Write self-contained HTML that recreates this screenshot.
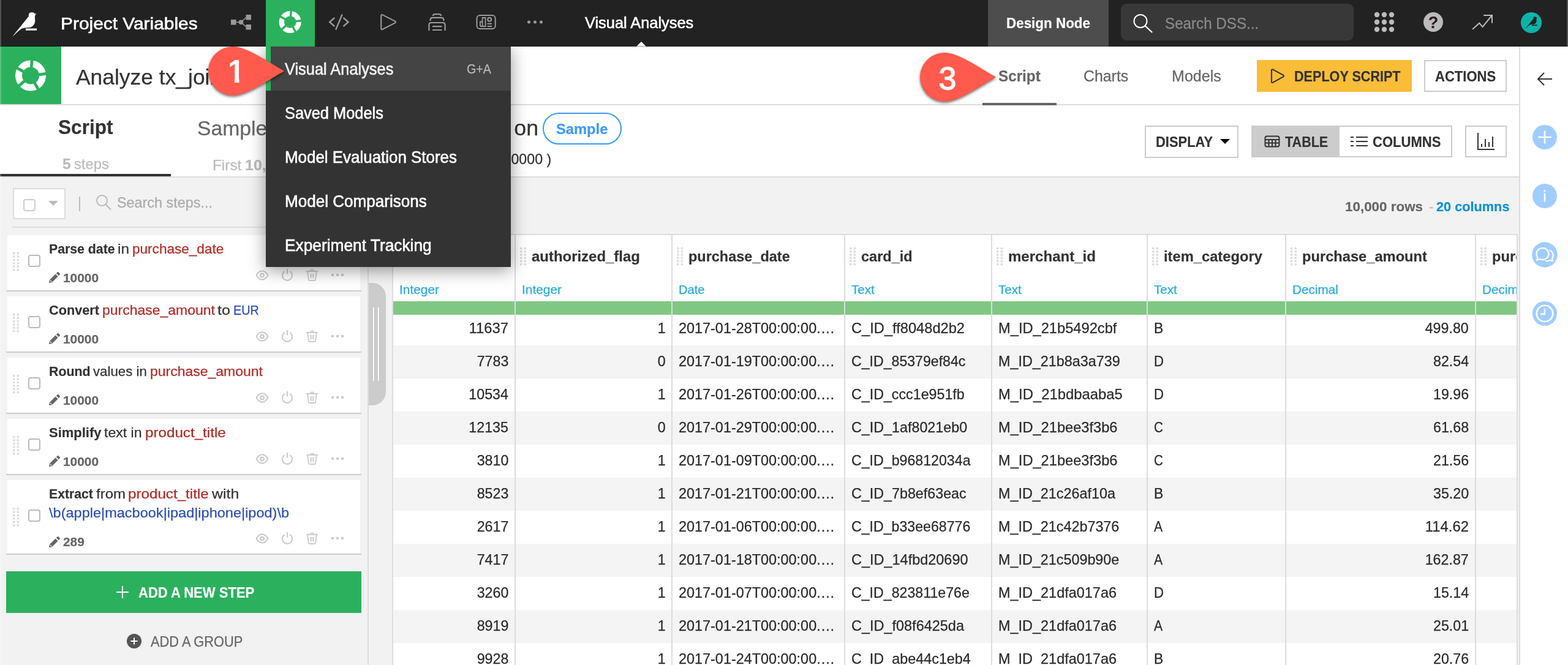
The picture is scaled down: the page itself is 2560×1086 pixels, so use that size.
<!DOCTYPE html>
<html lang="en"><head><meta charset="utf-8"><title>Analyze tx_joined - Script | Dataiku DSS</title>
<style>
html,body{margin:0;padding:0;}
body{width:2560px;height:1086px;background:#f2f2f2;font-family:"Liberation Sans",sans-serif;}
#root{position:relative;width:2560px;height:1086px;overflow:hidden;background:#f2f2f2;}
.b{position:absolute;box-sizing:border-box;}
.t{position:absolute;white-space:nowrap;}
svg{display:block;overflow:visible;}
.t{-webkit-text-stroke:0.25px currentColor;}
.tb{font-weight:bold;-webkit-text-stroke:0.2px currentColor;}

</style></head>
<body>
<div id="root">
<div class="b" style="left:0px;top:0px;width:2560px;height:76px;background:#222222;"></div>
<div class="b" style="left:0px;top:76px;width:2480px;height:94px;background:#fff;"></div>
<div class="b" style="left:0px;top:170px;width:2480px;height:2px;background:#ddd;"></div>
<div class="b" style="left:0px;top:172px;width:2480px;height:116px;background:#fff;"></div>
<div class="b" style="left:0px;top:288px;width:2480px;height:2px;background:#ddd;"></div>
<div class="b" style="left:2480px;top:76px;width:80px;height:1010px;background:#fff;border-left:2px solid #ddd;"></div>
<svg class="b" style="left:0px;top:0px;" width="100" height="76" viewBox="0 0 100 76"><path d="M20 60 L47 26.5 C46 23 48 20 52 20 C54.5 20 56 21 57 22.5 L59.5 22.3 L57.5 24.5 C56.5 27 57 30 57.3 33 C57.5 38 55 43 49 44.8 C45 45.5 40 45 36 46.5 C33 47.8 30 51 20 60 Z" fill="#fff"/><rect x="42" y="46.5" width="18" height="3.2" fill="#fff"/></svg>
<div class="t" style="top:25.30px;font-size:28.00px;line-height:28.00px;color:#fff;left:99.30px;transform-origin:0 0;transform:scaleX(1.0671);-webkit-text-stroke-width:0.6px;">Project Variables</div>
<svg class="b" style="left:370px;top:16px;" width="48" height="40" viewBox="0 0 48 40"><g fill="#999" stroke="#999"><rect x="7" y="16" width="8.5" height="8.5" stroke="none"/><rect x="31.5" y="8" width="8.5" height="8.5" stroke="none"/><rect x="31.5" y="24" width="8.5" height="8.5" stroke="none"/><circle cx="23.4" cy="20.2" r="3.8" stroke="none"/><path d="M15 20.2H23 M23.4 20.2 L32 12.5 M23.4 20.2 L32 28" fill="none" stroke-width="1.6"/></g></svg>
<div class="b" style="left:434px;top:0px;width:80px;height:76px;background:#2bb15d;"></div>
<svg class="b" style="left:434px;top:0px;" width="80" height="76" viewBox="0 0 80 76"><circle cx="39.7" cy="36" r="13.9" fill="none" stroke="#fff" stroke-width="8.2"/><line x1="40.38" y1="28.23" x2="41.44" y2="16.08" stroke="#2bb15d" stroke-width="3.42"/><line x1="47.44" y1="35.05" x2="59.55" y2="33.56" stroke="#2bb15d" stroke-width="3.42"/><line x1="43.48" y1="42.82" x2="49.40" y2="53.49" stroke="#2bb15d" stroke-width="3.42"/><line x1="33.81" y1="41.12" x2="24.61" y2="49.12" stroke="#2bb15d" stroke-width="3.42"/><line x1="32.88" y1="32.22" x2="22.21" y2="26.30" stroke="#2bb15d" stroke-width="3.42"/></svg>
<svg class="b" style="left:530px;top:16px;" width="48" height="40" viewBox="0 0 48 40"><path d="M16.2 13 L8.2 20 L16.2 27 M28.7 7.5 L18.2 32.5 M30.6 13 L38.6 20 L30.6 27" fill="none" stroke="#999" stroke-width="2.4"/></svg>
<svg class="b" style="left:610px;top:16px;" width="48" height="40" viewBox="0 0 48 40"><path d="M12.2 10 Q12.2 7.2 14.8 8.4 L35 18.6 Q37 20 35 21.4 L14.8 31.8 Q12.2 33 12.2 30.2 Z" fill="none" stroke="#999" stroke-width="2.1" stroke-linejoin="round"/></svg>
<svg class="b" style="left:690px;top:16px;" width="48" height="40" viewBox="0 0 48 40"><g fill="none" stroke="#999" stroke-width="2.2"><path d="M16.8 10 q0.3 -2.9 3.4 -2.9 h6.6 q3.1 0 3.4 2.9"/><path d="M12.6 18 v-1.5 q0 -3.6 3.6 -3.6 h14.6 q3.6 0 3.6 3.6 v1.5"/><path d="M10.4 34 v-9 q0 -4 4 -4 h18.2 q4 0 4 4 v9"/><path d="M16 27.2 h15.4 M16 33 h15.4"/></g></svg>
<svg class="b" style="left:770px;top:16px;" width="48" height="40" viewBox="0 0 48 40"><g fill="none" stroke="#999" stroke-width="2"><rect x="8.5" y="9" width="30.2" height="22" rx="5"/><path d="M14 27 v-7.5 h3.6 M17.6 27 v-14 h5 v14 Z M14 27 h8.6" stroke-width="1.8"/><circle cx="29.2" cy="15.8" r="3"/><path d="M25.5 22.8 h7.6 M25.5 27 h7.6"/></g></svg>
<svg class="b" style="left:850px;top:16px;" width="48" height="40" viewBox="0 0 48 40"><g fill="#999"><circle cx="13.5" cy="20" r="2.5"/><circle cx="23.5" cy="20" r="2.5"/><circle cx="33.5" cy="20" r="2.5"/></g></svg>
<div class="t" style="top:24.30px;font-size:26.32px;line-height:26.32px;color:#fff;left:955.00px;transform-origin:0 0;transform:scaleX(0.9646);-webkit-text-stroke-width:0.6px;">Visual Analyses</div>
<svg class="b" style="left:1037px;top:66px;" width="20" height="10" viewBox="0 0 20 10"><path d="M2 10 L10 2 L18 10 Z" fill="#fff"/></svg>
<div class="b" style="left:1613px;top:0px;width:197px;height:76px;background:#4d4d4d;"></div>
<div class="t tb" style="top:26.30px;font-size:24.44px;line-height:24.44px;color:#fff;left:1643.00px;transform-origin:0 0;transform:scaleX(0.9173);">Design Node</div>
<div class="b" style="left:1830px;top:6px;width:380px;height:60px;background:#383838;border-radius:9px;"></div>
<svg class="b" style="left:1846px;top:18px;" width="40" height="40" viewBox="0 0 40 40"><circle cx="16" cy="16.5" r="10.5" fill="none" stroke="#fff" stroke-width="2"/><path d="M23.6 24.2 L35.2 35" stroke="#fff" stroke-width="2.2" fill="none"/></svg>
<div class="t" style="top:25.30px;font-size:26.32px;line-height:26.32px;color:#8a8a8a;left:1902.00px;transform-origin:0 0;transform:scaleX(0.9193);">Search DSS...</div>
<svg class="b" style="left:2240px;top:16px;" width="40" height="40" viewBox="0 0 40 40"><g fill="#bbb"><circle cx="8" cy="8" r="4.2"/><circle cx="8" cy="20" r="4.2"/><circle cx="8" cy="32" r="4.2"/><circle cx="20" cy="8" r="4.2"/><circle cx="20" cy="20" r="4.2"/><circle cx="20" cy="32" r="4.2"/><circle cx="32" cy="8" r="4.2"/><circle cx="32" cy="20" r="4.2"/><circle cx="32" cy="32" r="4.2"/></g></svg>
<svg class="b" style="left:2320px;top:16px;" width="40" height="40" viewBox="0 0 40 40"><circle cx="20" cy="20" r="16" fill="#bbb"/><text x="20" y="29.5" text-anchor="middle" style="font-family:'Liberation Sans',sans-serif;font-weight:bold;font-size:27px" fill="#222">?</text></svg>
<svg class="b" style="left:2400px;top:16px;" width="40" height="40" viewBox="0 0 40 40"><path d="M4.2 31.8 L15.2 21.7 L20.5 27.9 L35.5 9.5 M22.2 9 H36 V21.7" fill="none" stroke="#bbb" stroke-width="2"/></svg>
<svg class="b" style="left:2480px;top:17px;" width="40" height="40" viewBox="0 0 40 40"><circle cx="20" cy="20" r="17.1" fill="#0bb3a9"/><g transform="translate(0,0.2) scale(0.5)"><path d="M20 60 L47 26.5 C46 23 48 20 52 20 C54.5 20 56 21 57 22.5 L59.5 22.3 L57.5 24.5 C56.5 27 57 30 57.3 33 C57.5 38 55 43 49 44.8 C45 45.5 40 45 36 46.5 C33 47.8 30 51 20 60 Z" fill="#222"/><rect x="42" y="46.5" width="18" height="3.2" fill="#222"/></g></svg>
<div class="b" style="left:0px;top:76px;width:100px;height:94px;background:#2bb15d;"></div>
<svg class="b" style="left:0px;top:76px;" width="100" height="94" viewBox="0 0 100 94"><circle cx="50" cy="47.5" r="19.5" fill="none" stroke="#fff" stroke-width="11"/><line x1="51.05" y1="35.55" x2="52.35" y2="20.60" stroke="#2bb15d" stroke-width="4.75"/><line x1="61.91" y1="46.04" x2="76.80" y2="44.21" stroke="#2bb15d" stroke-width="4.75"/><line x1="55.82" y1="58.00" x2="63.09" y2="71.11" stroke="#2bb15d" stroke-width="4.75"/><line x1="40.94" y1="55.37" x2="29.62" y2="65.21" stroke="#2bb15d" stroke-width="4.75"/><line x1="39.50" y1="41.68" x2="26.39" y2="34.41" stroke="#2bb15d" stroke-width="4.75"/></svg>
<div class="t" style="top:109.30px;font-size:35.72px;line-height:35.72px;color:#333;left:123.50px;transform-origin:0 0;transform:scaleX(0.9913);">Analyze tx_joined</div>
<div class="t tb" style="top:112.30px;font-size:25.38px;line-height:25.38px;color:#666;left:1630.30px;transform-origin:0 0;transform:scaleX(0.9555);">Script</div>
<div class="t" style="top:112.30px;font-size:25.38px;line-height:25.38px;color:#666;left:1768.60px;transform-origin:0 0;transform:scaleX(0.9801);">Charts</div>
<div class="t" style="top:112.30px;font-size:25.38px;line-height:25.38px;color:#666;left:1913.00px;transform-origin:0 0;transform:scaleX(0.9882);">Models</div>
<div class="b" style="left:1604px;top:168px;width:121px;height:4px;background:#666;"></div>
<div class="b" style="left:2052px;top:98px;width:253px;height:52px;background:#f9bd38;"></div>
<svg class="b" style="left:2070px;top:108px;" width="32" height="32" viewBox="0 0 32 32"><path d="M6 7 Q6 4.4 8.4 5.6 L25 14.6 Q27 16 25 17.4 L8.4 26.6 Q6 27.8 6 25.2 Z" fill="none" stroke="#333" stroke-width="2.1" stroke-linejoin="round"/></svg>
<div class="t tb" style="top:113.30px;font-size:24.44px;line-height:24.44px;color:#333;left:2113.00px;transform-origin:0 0;transform:scaleX(0.8835);">DEPLOY SCRIPT</div>
<div class="b" style="left:2325px;top:98px;width:135px;height:52px;background:#fff;border:2px solid #ccc;"></div>
<div class="t tb" style="top:113.30px;font-size:24.44px;line-height:24.44px;color:#333;left:2342.50px;transform-origin:0 0;transform:scaleX(0.9017);">ACTIONS</div>
<svg class="b" style="left:2506px;top:115px;" width="32" height="28" viewBox="0 0 32 28"><path d="M28 14 H5 M15 4 L5 14 L15 24" fill="none" stroke="#333" stroke-width="2"/></svg>
<div class="t tb" style="top:191.30px;font-size:33.84px;line-height:33.84px;color:#333;left:94.80px;transform-origin:0 0;transform:scaleX(0.9335);">Script</div>
<div class="t" style="top:193.30px;font-size:33.84px;line-height:33.84px;color:#666;left:322.00px;transform-origin:0 0;transform:scaleX(0.9959);">Sample</div>
<div class="t tb" style="top:256.30px;left:101.80px;font-size:24.44px;line-height:24.44px;color:#bbb;transform-origin:0 0;transform:scaleX(1.0103);">5</div>
<div class="t" style="top:256.30px;left:120.74px;font-size:24.44px;line-height:24.44px;color:#bbb;transform-origin:0 0;transform:scaleX(0.9754);">steps</div>
<div class="t" style="top:258.30px;left:347.00px;font-size:24.44px;line-height:24.44px;color:#bbb;transform-origin:0 0;transform:scaleX(0.9964);">First</div>
<div class="t tb" style="top:258.30px;left:399.55px;font-size:24.44px;line-height:24.44px;color:#bbb;transform-origin:0 0;transform:scaleX(1.0228);">10,000</div>
<div class="t" style="top:258.30px;left:481.20px;font-size:24.44px;line-height:24.44px;color:#bbb;transform-origin:0 0;transform:scaleX(1.0145);">rows</div>
<div class="b" style="left:0px;top:284px;width:279px;height:4px;background:#333;"></div>
<div class="t" style="top:192.30px;font-size:35.72px;line-height:35.72px;color:#333;right:1681.00px;transform-origin:100% 0;transform:scaleX(1.0028);">Designing preparation on</div>
<div class="b" style="left:886px;top:184px;width:129px;height:52px;border:2px solid #3b99fc;border-radius:26px;background:#fff;"></div>
<div class="t tb" style="top:199.30px;font-size:24.44px;line-height:24.44px;color:#3b99fc;left:908.00px;transform-origin:0 0;transform:scaleX(0.9709);">Sample</div>
<div class="t" style="top:248.30px;font-size:24.44px;line-height:24.44px;color:#333;right:1660.00px;transform-origin:100% 0;transform:scaleX(0.9488);">( cached, 10000 )</div>
<div class="b" style="left:1869px;top:205px;width:153px;height:53px;background:#fff;border:2px solid #ccc;"></div>
<div class="t tb" style="top:220.30px;font-size:24.44px;line-height:24.44px;color:#333;left:1887.00px;transform-origin:0 0;transform:scaleX(0.8972);">DISPLAY</div>
<svg class="b" style="left:1990px;top:225px;" width="20" height="12" viewBox="0 0 20 12"><path d="M2 2 H18 L10 10 Z" fill="#000"/></svg>
<div class="b" style="left:2043px;top:205px;width:144px;height:52px;background:#ccc;"></div>
<svg class="b" style="left:2063px;top:219px;" width="28" height="24" viewBox="0 0 28 24"><g fill="none" stroke="#333" stroke-width="2"><rect x="2.5" y="3.5" width="23" height="17" rx="3"/><path d="M2.5 9 H25.5 M2.5 14.5 H25.5 M8.5 9 V20.5 M14 9 V20.5 M19.5 9 V20.5"/></g></svg>
<div class="t tb" style="top:220.30px;font-size:24.44px;line-height:24.44px;color:#333;left:2098.00px;transform-origin:0 0;transform:scaleX(0.8819);">TABLE</div>
<div class="b" style="left:2187px;top:205px;width:184px;height:52px;background:#fff;border:2px solid #ccc;border-left:none;"></div>
<svg class="b" style="left:2203px;top:219px;" width="32" height="24" viewBox="0 0 32 24"><path d="M2 5 H7 M11 5 H30 M2 12 H7 M11 12 H30 M2 19 H7 M11 19 H30" fill="none" stroke="#333" stroke-width="2"/></svg>
<div class="t tb" style="top:220.30px;font-size:24.44px;line-height:24.44px;color:#333;left:2241.00px;transform-origin:0 0;transform:scaleX(0.9025);">COLUMNS</div>
<div class="b" style="left:2392px;top:205px;width:68px;height:52px;background:#fff;border:2px solid #ccc;"></div>
<svg class="b" style="left:2408px;top:213px;" width="36" height="36" viewBox="0 0 36 36"><path d="M5 4 V31 H32 M11 27 V22 M17 27 V14 M23 27 V19 M29 27 V10" fill="none" stroke="#333" stroke-width="2"/></svg>
<div class="b" style="left:600px;top:290px;width:2px;height:796px;background:#ddd;"></div>
<div class="b" style="left:20.5px;top:306.5px;width:86.5px;height:51px;background:#fff;border:2px solid #ddd;"></div>
<div class="b" style="left:38px;top:325px;width:20px;height:20px;background:#fff;border:2px solid #ccc;border-radius:4px;"></div>
<svg class="b" style="left:77px;top:326px;" width="20" height="12" viewBox="0 0 20 12"><path d="M2 2 H18 L10 10 Z" fill="#bbb"/></svg>
<div class="b" style="left:129px;top:321px;width:2px;height:24px;background:#bbb;"></div>
<svg class="b" style="left:154px;top:315px;" width="30" height="30" viewBox="0 0 30 30"><circle cx="12.5" cy="12.5" r="8.5" fill="none" stroke="#bbb" stroke-width="2"/><path d="M18.7 18.9 L27 27.5" stroke="#bbb" stroke-width="2.2" fill="none"/></svg>
<div class="t" style="top:319.30px;font-size:24.44px;line-height:24.44px;color:#aaa;left:191.00px;transform-origin:0 0;transform:scaleX(0.9564);">Search steps...</div>
<div class="b" style="left:20px;top:370px;width:570px;height:2px;background:#ddd;"></div>
<div class="b" style="left:12px;top:384px;width:576px;height:90px;background:#fff;"></div>
<div class="b" style="left:10px;top:474px;width:580px;height:2px;background:#ccc;"></div>
<svg class="b" style="left:21px;top:412px;" width="12" height="32" viewBox="0 0 12 32"><g fill="#ddd"><rect x="0" y="0" width="3.4" height="3.4"/><rect x="0" y="5.4" width="3.4" height="3.4"/><rect x="0" y="10.8" width="3.4" height="3.4"/><rect x="0" y="16.2" width="3.4" height="3.4"/><rect x="0" y="21.6" width="3.4" height="3.4"/><rect x="0" y="27" width="3.4" height="3.4"/><rect x="6.6" y="0" width="3.4" height="3.4"/><rect x="6.6" y="5.4" width="3.4" height="3.4"/><rect x="6.6" y="10.8" width="3.4" height="3.4"/><rect x="6.6" y="16.2" width="3.4" height="3.4"/><rect x="6.6" y="21.6" width="3.4" height="3.4"/><rect x="6.6" y="27" width="3.4" height="3.4"/></g></svg>
<div class="b" style="left:46px;top:416px;width:20px;height:20px;background:#fff;border:2px solid #bbb;border-radius:4px;"></div>
<div class="t tb" style="top:396.30px;left:80.00px;font-size:22.56px;line-height:22.56px;color:#333;transform-origin:0 0;transform:scaleX(0.9429);">Parse date</div>
<div class="t" style="top:396.30px;left:192.36px;font-size:22.56px;line-height:22.56px;color:#333;transform-origin:0 0;transform:scaleX(1.0845);">in</div>
<div class="t" style="top:396.30px;left:216.22px;font-size:22.56px;line-height:22.56px;color:#b02a26;transform-origin:0 0;transform:scaleX(1.0007);">purchase_date</div>
<svg class="b" style="left:79px;top:443px;" width="20" height="20" viewBox="0 0 20 20"><path d="M1 19 L1.8 14.2 L11.6 4.4 L15.6 8.4 L5.8 18.2 Z M12.8 3.2 L14.6 1.4 Q15.6 0.6 16.6 1.4 L18.6 3.4 Q19.4 4.4 18.6 5.4 L16.8 7.2 Z" fill="#666"/><path d="M2.6 14.6 L5.4 17.4" stroke="#fff" stroke-width="1.1"/></svg>
<div class="t tb" style="top:444.30px;font-size:20.68px;line-height:20.68px;color:#666;left:103.20px;transform-origin:0 0;transform:scaleX(1.0106);">10000</div>
<svg class="b" style="left:417px;top:438.5px;" width="24" height="22" viewBox="0 0 24 22"><g fill="none" stroke="#ccc"><path d="M1.6 10.5 Q5.4 3.4 11 3.4 Q16.6 3.4 20.4 10.5 Q16.6 17.6 11 17.6 Q5.4 17.6 1.6 10.5 Z" stroke-width="2.2" stroke-linejoin="round"/><circle cx="11" cy="10.5" r="2.8" stroke-width="2.4"/></g></svg>
<svg class="b" style="left:458px;top:438px;" width="22" height="22" viewBox="0 0 22 22"><g fill="none" stroke="#ccc" stroke-width="2.1"><path d="M6.6 5.2 A8 8 0 1 0 15.4 5.2"/><path d="M11 1 V9.5"/></g></svg>
<svg class="b" style="left:499px;top:438px;" width="22" height="22" viewBox="0 0 22 22"><g fill="none" stroke="#ccc" stroke-width="1.9"><path d="M1 5 H20"/><path d="M7.6 4.6 A3 3 0 0 1 13.4 4.6"/><path d="M3.2 5.5 L4.8 18.5 Q5 20 6.6 20 H14.4 Q16 20 16.2 18.5 L17.8 5.5"/><path d="M8.6 9 V16.5 M12.4 9 V16.5" stroke-width="2.2"/></g></svg>
<svg class="b" style="left:539.5px;top:446px;" width="22" height="6" viewBox="0 0 22 6"><g fill="#ccc"><circle cx="3" cy="3" r="2.3"/><circle cx="11" cy="3" r="2.3"/><circle cx="19" cy="3" r="2.3"/></g></svg>
<div class="b" style="left:12px;top:484px;width:576px;height:90px;background:#fff;"></div>
<div class="b" style="left:10px;top:574px;width:580px;height:2px;background:#ccc;"></div>
<svg class="b" style="left:21px;top:512px;" width="12" height="32" viewBox="0 0 12 32"><g fill="#ddd"><rect x="0" y="0" width="3.4" height="3.4"/><rect x="0" y="5.4" width="3.4" height="3.4"/><rect x="0" y="10.8" width="3.4" height="3.4"/><rect x="0" y="16.2" width="3.4" height="3.4"/><rect x="0" y="21.6" width="3.4" height="3.4"/><rect x="0" y="27" width="3.4" height="3.4"/><rect x="6.6" y="0" width="3.4" height="3.4"/><rect x="6.6" y="5.4" width="3.4" height="3.4"/><rect x="6.6" y="10.8" width="3.4" height="3.4"/><rect x="6.6" y="16.2" width="3.4" height="3.4"/><rect x="6.6" y="21.6" width="3.4" height="3.4"/><rect x="6.6" y="27" width="3.4" height="3.4"/></g></svg>
<div class="b" style="left:46px;top:516px;width:20px;height:20px;background:#fff;border:2px solid #bbb;border-radius:4px;"></div>
<div class="t tb" style="top:496.30px;left:80.00px;font-size:22.56px;line-height:22.56px;color:#333;transform-origin:0 0;transform:scaleX(0.9620);">Convert</div>
<div class="t" style="top:496.30px;left:166.78px;font-size:22.56px;line-height:22.56px;color:#b02a26;transform-origin:0 0;transform:scaleX(1.0184);">purchase_amount</div>
<div class="t" style="top:496.30px;left:355.42px;font-size:22.56px;line-height:22.56px;color:#333;transform-origin:0 0;transform:scaleX(1.1055);">to</div>
<div class="t" style="top:496.30px;left:381.03px;font-size:22.56px;line-height:22.56px;color:#2b4fb5;transform-origin:0 0;transform:scaleX(0.8779);">EUR</div>
<svg class="b" style="left:79px;top:543px;" width="20" height="20" viewBox="0 0 20 20"><path d="M1 19 L1.8 14.2 L11.6 4.4 L15.6 8.4 L5.8 18.2 Z M12.8 3.2 L14.6 1.4 Q15.6 0.6 16.6 1.4 L18.6 3.4 Q19.4 4.4 18.6 5.4 L16.8 7.2 Z" fill="#666"/><path d="M2.6 14.6 L5.4 17.4" stroke="#fff" stroke-width="1.1"/></svg>
<div class="t tb" style="top:544.30px;font-size:20.68px;line-height:20.68px;color:#666;left:103.20px;transform-origin:0 0;transform:scaleX(1.0106);">10000</div>
<svg class="b" style="left:417px;top:538.5px;" width="24" height="22" viewBox="0 0 24 22"><g fill="none" stroke="#ccc"><path d="M1.6 10.5 Q5.4 3.4 11 3.4 Q16.6 3.4 20.4 10.5 Q16.6 17.6 11 17.6 Q5.4 17.6 1.6 10.5 Z" stroke-width="2.2" stroke-linejoin="round"/><circle cx="11" cy="10.5" r="2.8" stroke-width="2.4"/></g></svg>
<svg class="b" style="left:458px;top:538px;" width="22" height="22" viewBox="0 0 22 22"><g fill="none" stroke="#ccc" stroke-width="2.1"><path d="M6.6 5.2 A8 8 0 1 0 15.4 5.2"/><path d="M11 1 V9.5"/></g></svg>
<svg class="b" style="left:499px;top:538px;" width="22" height="22" viewBox="0 0 22 22"><g fill="none" stroke="#ccc" stroke-width="1.9"><path d="M1 5 H20"/><path d="M7.6 4.6 A3 3 0 0 1 13.4 4.6"/><path d="M3.2 5.5 L4.8 18.5 Q5 20 6.6 20 H14.4 Q16 20 16.2 18.5 L17.8 5.5"/><path d="M8.6 9 V16.5 M12.4 9 V16.5" stroke-width="2.2"/></g></svg>
<svg class="b" style="left:539.5px;top:546px;" width="22" height="6" viewBox="0 0 22 6"><g fill="#ccc"><circle cx="3" cy="3" r="2.3"/><circle cx="11" cy="3" r="2.3"/><circle cx="19" cy="3" r="2.3"/></g></svg>
<div class="b" style="left:12px;top:584px;width:576px;height:90px;background:#fff;"></div>
<div class="b" style="left:10px;top:674px;width:580px;height:2px;background:#ccc;"></div>
<svg class="b" style="left:21px;top:612px;" width="12" height="32" viewBox="0 0 12 32"><g fill="#ddd"><rect x="0" y="0" width="3.4" height="3.4"/><rect x="0" y="5.4" width="3.4" height="3.4"/><rect x="0" y="10.8" width="3.4" height="3.4"/><rect x="0" y="16.2" width="3.4" height="3.4"/><rect x="0" y="21.6" width="3.4" height="3.4"/><rect x="0" y="27" width="3.4" height="3.4"/><rect x="6.6" y="0" width="3.4" height="3.4"/><rect x="6.6" y="5.4" width="3.4" height="3.4"/><rect x="6.6" y="10.8" width="3.4" height="3.4"/><rect x="6.6" y="16.2" width="3.4" height="3.4"/><rect x="6.6" y="21.6" width="3.4" height="3.4"/><rect x="6.6" y="27" width="3.4" height="3.4"/></g></svg>
<div class="b" style="left:46px;top:616px;width:20px;height:20px;background:#fff;border:2px solid #bbb;border-radius:4px;"></div>
<div class="t tb" style="top:596.30px;left:80.00px;font-size:22.56px;line-height:22.56px;color:#333;transform-origin:0 0;transform:scaleX(0.9453);">Round</div>
<div class="t" style="top:596.30px;left:152.28px;font-size:22.56px;line-height:22.56px;color:#333;transform-origin:0 0;transform:scaleX(0.9865);">values in</div>
<div class="t" style="top:596.30px;left:244.89px;font-size:22.56px;line-height:22.56px;color:#b02a26;transform-origin:0 0;transform:scaleX(1.0184);">purchase_amount</div>
<svg class="b" style="left:79px;top:643px;" width="20" height="20" viewBox="0 0 20 20"><path d="M1 19 L1.8 14.2 L11.6 4.4 L15.6 8.4 L5.8 18.2 Z M12.8 3.2 L14.6 1.4 Q15.6 0.6 16.6 1.4 L18.6 3.4 Q19.4 4.4 18.6 5.4 L16.8 7.2 Z" fill="#666"/><path d="M2.6 14.6 L5.4 17.4" stroke="#fff" stroke-width="1.1"/></svg>
<div class="t tb" style="top:644.30px;font-size:20.68px;line-height:20.68px;color:#666;left:103.20px;transform-origin:0 0;transform:scaleX(1.0106);">10000</div>
<svg class="b" style="left:417px;top:638.5px;" width="24" height="22" viewBox="0 0 24 22"><g fill="none" stroke="#ccc"><path d="M1.6 10.5 Q5.4 3.4 11 3.4 Q16.6 3.4 20.4 10.5 Q16.6 17.6 11 17.6 Q5.4 17.6 1.6 10.5 Z" stroke-width="2.2" stroke-linejoin="round"/><circle cx="11" cy="10.5" r="2.8" stroke-width="2.4"/></g></svg>
<svg class="b" style="left:458px;top:638px;" width="22" height="22" viewBox="0 0 22 22"><g fill="none" stroke="#ccc" stroke-width="2.1"><path d="M6.6 5.2 A8 8 0 1 0 15.4 5.2"/><path d="M11 1 V9.5"/></g></svg>
<svg class="b" style="left:499px;top:638px;" width="22" height="22" viewBox="0 0 22 22"><g fill="none" stroke="#ccc" stroke-width="1.9"><path d="M1 5 H20"/><path d="M7.6 4.6 A3 3 0 0 1 13.4 4.6"/><path d="M3.2 5.5 L4.8 18.5 Q5 20 6.6 20 H14.4 Q16 20 16.2 18.5 L17.8 5.5"/><path d="M8.6 9 V16.5 M12.4 9 V16.5" stroke-width="2.2"/></g></svg>
<svg class="b" style="left:539.5px;top:646px;" width="22" height="6" viewBox="0 0 22 6"><g fill="#ccc"><circle cx="3" cy="3" r="2.3"/><circle cx="11" cy="3" r="2.3"/><circle cx="19" cy="3" r="2.3"/></g></svg>
<div class="b" style="left:12px;top:684px;width:576px;height:90px;background:#fff;"></div>
<div class="b" style="left:10px;top:774px;width:580px;height:2px;background:#ccc;"></div>
<svg class="b" style="left:21px;top:712px;" width="12" height="32" viewBox="0 0 12 32"><g fill="#ddd"><rect x="0" y="0" width="3.4" height="3.4"/><rect x="0" y="5.4" width="3.4" height="3.4"/><rect x="0" y="10.8" width="3.4" height="3.4"/><rect x="0" y="16.2" width="3.4" height="3.4"/><rect x="0" y="21.6" width="3.4" height="3.4"/><rect x="0" y="27" width="3.4" height="3.4"/><rect x="6.6" y="0" width="3.4" height="3.4"/><rect x="6.6" y="5.4" width="3.4" height="3.4"/><rect x="6.6" y="10.8" width="3.4" height="3.4"/><rect x="6.6" y="16.2" width="3.4" height="3.4"/><rect x="6.6" y="21.6" width="3.4" height="3.4"/><rect x="6.6" y="27" width="3.4" height="3.4"/></g></svg>
<div class="b" style="left:46px;top:716px;width:20px;height:20px;background:#fff;border:2px solid #bbb;border-radius:4px;"></div>
<div class="t tb" style="top:696.30px;left:80.00px;font-size:22.56px;line-height:22.56px;color:#333;transform-origin:0 0;transform:scaleX(0.9740);">Simplify</div>
<div class="t" style="top:696.30px;left:170.23px;font-size:22.56px;line-height:22.56px;color:#333;transform-origin:0 0;transform:scaleX(1.0239);">text in</div>
<div class="t" style="top:696.30px;left:236.64px;font-size:22.56px;line-height:22.56px;color:#b02a26;transform-origin:0 0;transform:scaleX(1.0726);">product_title</div>
<svg class="b" style="left:79px;top:743px;" width="20" height="20" viewBox="0 0 20 20"><path d="M1 19 L1.8 14.2 L11.6 4.4 L15.6 8.4 L5.8 18.2 Z M12.8 3.2 L14.6 1.4 Q15.6 0.6 16.6 1.4 L18.6 3.4 Q19.4 4.4 18.6 5.4 L16.8 7.2 Z" fill="#666"/><path d="M2.6 14.6 L5.4 17.4" stroke="#fff" stroke-width="1.1"/></svg>
<div class="t tb" style="top:744.30px;font-size:20.68px;line-height:20.68px;color:#666;left:103.20px;transform-origin:0 0;transform:scaleX(1.0106);">10000</div>
<svg class="b" style="left:417px;top:738.5px;" width="24" height="22" viewBox="0 0 24 22"><g fill="none" stroke="#ccc"><path d="M1.6 10.5 Q5.4 3.4 11 3.4 Q16.6 3.4 20.4 10.5 Q16.6 17.6 11 17.6 Q5.4 17.6 1.6 10.5 Z" stroke-width="2.2" stroke-linejoin="round"/><circle cx="11" cy="10.5" r="2.8" stroke-width="2.4"/></g></svg>
<svg class="b" style="left:458px;top:738px;" width="22" height="22" viewBox="0 0 22 22"><g fill="none" stroke="#ccc" stroke-width="2.1"><path d="M6.6 5.2 A8 8 0 1 0 15.4 5.2"/><path d="M11 1 V9.5"/></g></svg>
<svg class="b" style="left:499px;top:738px;" width="22" height="22" viewBox="0 0 22 22"><g fill="none" stroke="#ccc" stroke-width="1.9"><path d="M1 5 H20"/><path d="M7.6 4.6 A3 3 0 0 1 13.4 4.6"/><path d="M3.2 5.5 L4.8 18.5 Q5 20 6.6 20 H14.4 Q16 20 16.2 18.5 L17.8 5.5"/><path d="M8.6 9 V16.5 M12.4 9 V16.5" stroke-width="2.2"/></g></svg>
<svg class="b" style="left:539.5px;top:746px;" width="22" height="6" viewBox="0 0 22 6"><g fill="#ccc"><circle cx="3" cy="3" r="2.3"/><circle cx="11" cy="3" r="2.3"/><circle cx="19" cy="3" r="2.3"/></g></svg>
<div class="b" style="left:12px;top:784px;width:576px;height:120px;background:#fff;"></div>
<div class="b" style="left:10px;top:904px;width:580px;height:2px;background:#ccc;"></div>
<svg class="b" style="left:21px;top:829px;" width="12" height="32" viewBox="0 0 12 32"><g fill="#ddd"><rect x="0" y="0" width="3.4" height="3.4"/><rect x="0" y="5.4" width="3.4" height="3.4"/><rect x="0" y="10.8" width="3.4" height="3.4"/><rect x="0" y="16.2" width="3.4" height="3.4"/><rect x="0" y="21.6" width="3.4" height="3.4"/><rect x="0" y="27" width="3.4" height="3.4"/><rect x="6.6" y="0" width="3.4" height="3.4"/><rect x="6.6" y="5.4" width="3.4" height="3.4"/><rect x="6.6" y="10.8" width="3.4" height="3.4"/><rect x="6.6" y="16.2" width="3.4" height="3.4"/><rect x="6.6" y="21.6" width="3.4" height="3.4"/><rect x="6.6" y="27" width="3.4" height="3.4"/></g></svg>
<div class="b" style="left:46px;top:832px;width:20px;height:20px;background:#fff;border:2px solid #bbb;border-radius:4px;"></div>
<div class="t tb" style="top:796.30px;left:80.00px;font-size:22.56px;line-height:22.56px;color:#333;transform-origin:0 0;transform:scaleX(0.9393);">Extract</div>
<div class="t" style="top:796.30px;left:156.62px;font-size:22.56px;line-height:22.56px;color:#333;transform-origin:0 0;transform:scaleX(1.0641);">from</div>
<div class="t" style="top:796.30px;left:209.44px;font-size:22.56px;line-height:22.56px;color:#b02a26;transform-origin:0 0;transform:scaleX(1.0726);">product_title</div>
<div class="t" style="top:796.30px;left:346.02px;font-size:22.56px;line-height:22.56px;color:#333;transform-origin:0 0;transform:scaleX(1.1052);">with</div>
<div class="t" style="top:827.30px;font-size:22.56px;line-height:22.56px;color:#2b4fb5;left:80.00px;transform-origin:0 0;transform:scaleX(1.0437);">\b(apple|macbook|ipad|iphone|ipod)\b</div>
<svg class="b" style="left:79px;top:874.8px;" width="20" height="20" viewBox="0 0 20 20"><path d="M1 19 L1.8 14.2 L11.6 4.4 L15.6 8.4 L5.8 18.2 Z M12.8 3.2 L14.6 1.4 Q15.6 0.6 16.6 1.4 L18.6 3.4 Q19.4 4.4 18.6 5.4 L16.8 7.2 Z" fill="#666"/><path d="M2.6 14.6 L5.4 17.4" stroke="#fff" stroke-width="1.1"/></svg>
<div class="t tb" style="top:875.30px;font-size:20.68px;line-height:20.68px;color:#666;left:103.20px;transform-origin:0 0;transform:scaleX(1.0104);">289</div>
<svg class="b" style="left:417px;top:868.5px;" width="24" height="22" viewBox="0 0 24 22"><g fill="none" stroke="#ccc"><path d="M1.6 10.5 Q5.4 3.4 11 3.4 Q16.6 3.4 20.4 10.5 Q16.6 17.6 11 17.6 Q5.4 17.6 1.6 10.5 Z" stroke-width="2.2" stroke-linejoin="round"/><circle cx="11" cy="10.5" r="2.8" stroke-width="2.4"/></g></svg>
<svg class="b" style="left:458px;top:868px;" width="22" height="22" viewBox="0 0 22 22"><g fill="none" stroke="#ccc" stroke-width="2.1"><path d="M6.6 5.2 A8 8 0 1 0 15.4 5.2"/><path d="M11 1 V9.5"/></g></svg>
<svg class="b" style="left:499px;top:868px;" width="22" height="22" viewBox="0 0 22 22"><g fill="none" stroke="#ccc" stroke-width="1.9"><path d="M1 5 H20"/><path d="M7.6 4.6 A3 3 0 0 1 13.4 4.6"/><path d="M3.2 5.5 L4.8 18.5 Q5 20 6.6 20 H14.4 Q16 20 16.2 18.5 L17.8 5.5"/><path d="M8.6 9 V16.5 M12.4 9 V16.5" stroke-width="2.2"/></g></svg>
<svg class="b" style="left:539.5px;top:876px;" width="22" height="6" viewBox="0 0 22 6"><g fill="#ccc"><circle cx="3" cy="3" r="2.3"/><circle cx="11" cy="3" r="2.3"/><circle cx="19" cy="3" r="2.3"/></g></svg>
<div class="b" style="left:10px;top:933px;width:580px;height:67.5px;background:#2bb15d;"></div>
<svg class="b" style="left:188px;top:955px;" width="24" height="24" viewBox="0 0 24 24"><path d="M12 2 V22 M2 12 H22" stroke="#fff" stroke-width="2" fill="none"/></svg>
<div class="t tb" style="top:956.30px;font-size:24.44px;line-height:24.44px;color:#fff;left:226.00px;transform-origin:0 0;transform:scaleX(0.9011);">ADD A NEW STEP</div>
<svg class="b" style="left:206px;top:1034px;" width="26" height="26" viewBox="0 0 26 26"><circle cx="13" cy="13" r="12" fill="#555"/><path d="M13 7.5 V18.5 M7.5 13 H18.5" stroke="#fff" stroke-width="2" fill="none"/></svg>
<div class="t" style="top:1036.30px;font-size:24.44px;line-height:24.44px;color:#666;left:246.00px;transform-origin:0 0;transform:scaleX(0.8920);">ADD A GROUP</div>
<div class="b" style="left:602px;top:462px;width:28px;height:200px;background:#ccc;border-radius:0 22px 22px 0;"></div>
<div class="b" style="left:609px;top:502px;width:2px;height:120px;background:#fff;"></div>
<div class="b" style="left:611px;top:502px;width:1px;height:120px;background:#bbb;"></div>
<div class="b" style="left:617px;top:502px;width:2px;height:120px;background:#fff;"></div>
<div class="b" style="left:619px;top:502px;width:1px;height:120px;background:#bbb;"></div>
<div class="t tb" style="top:327.30px;font-size:22.56px;line-height:22.56px;color:#666;left:2195.50px;transform-origin:0 0;transform:scaleX(0.9938);">10,000 rows</div>
<div class="t" style="top:327.30px;font-size:22.56px;line-height:22.56px;color:#bbb;left:2333.00px;transform-origin:0 0;transform:scaleX(0.9938);">-</div>
<div class="t tb" style="top:327.30px;font-size:22.56px;line-height:22.56px;color:#0b8fd6;left:2344.50px;transform-origin:0 0;transform:scaleX(0.9630);">20 columns</div>
<div class="b" style="left:640px;top:382px;width:1838px;height:704px;background:#fff;border:2px solid #ddd;border-bottom:none;"></div>
<div class="b" style="left:642px;top:564px;width:1834px;height:54px;background:#f4f4f4;"></div>
<div class="b" style="left:642px;top:672px;width:1834px;height:54px;background:#f4f4f4;"></div>
<div class="b" style="left:642px;top:780px;width:1834px;height:54px;background:#f4f4f4;"></div>
<div class="b" style="left:642px;top:888px;width:1834px;height:54px;background:#f4f4f4;"></div>
<div class="b" style="left:642px;top:996px;width:1834px;height:54px;background:#f4f4f4;"></div>
<div class="b" style="left:642px;top:492px;width:1834px;height:22px;background:#81c784;"></div>
<div class="b" style="left:840px;top:384px;width:2px;height:702px;background:#dcdcdc;"></div>
<div class="b" style="left:1096px;top:384px;width:2px;height:702px;background:#dcdcdc;"></div>
<div class="b" style="left:1378px;top:384px;width:2px;height:702px;background:#dcdcdc;"></div>
<div class="b" style="left:1618px;top:384px;width:2px;height:702px;background:#dcdcdc;"></div>
<div class="b" style="left:1872px;top:384px;width:2px;height:702px;background:#dcdcdc;"></div>
<div class="b" style="left:2098px;top:384px;width:2px;height:702px;background:#dcdcdc;"></div>
<div class="b" style="left:2408px;top:384px;width:2px;height:702px;background:#dcdcdc;"></div>
<svg class="b" style="left:649px;top:404px;" width="12" height="32" viewBox="0 0 12 32"><g fill="#ddd"><rect x="0" y="0" width="3.4" height="3.4"/><rect x="0" y="5.2" width="3.4" height="3.4"/><rect x="0" y="10.4" width="3.4" height="3.4"/><rect x="0" y="15.6" width="3.4" height="3.4"/><rect x="0" y="20.8" width="3.4" height="3.4"/><rect x="0" y="26" width="3.4" height="3.4"/><rect x="6.6" y="0" width="3.4" height="3.4"/><rect x="6.6" y="5.2" width="3.4" height="3.4"/><rect x="6.6" y="10.4" width="3.4" height="3.4"/><rect x="6.6" y="15.6" width="3.4" height="3.4"/><rect x="6.6" y="20.8" width="3.4" height="3.4"/><rect x="6.6" y="26" width="3.4" height="3.4"/></g></svg>
<div class="t tb" style="top:407.30px;font-size:24.44px;line-height:24.44px;color:#333;left:668.00px;transform-origin:0 0;transform:scaleX(0.9716);">transaction_id</div>
<div class="t" style="top:463.30px;font-size:20.68px;line-height:20.68px;color:#28a9dd;left:651.50px;transform-origin:0 0;transform:scaleX(1.0097);">Integer</div>
<div class="t" style="top:524.30px;font-size:24.44px;line-height:24.44px;color:#2a2a2a;right:1729.80px;transform-origin:100% 0;transform:scaleX(0.9769);">11637</div>
<div class="t" style="top:578.30px;font-size:24.44px;line-height:24.44px;color:#2a2a2a;right:1729.80px;transform-origin:100% 0;transform:scaleX(0.9509);">7783</div>
<div class="t" style="top:632.30px;font-size:24.44px;line-height:24.44px;color:#2a2a2a;right:1729.80px;transform-origin:100% 0;transform:scaleX(0.9508);">10534</div>
<div class="t" style="top:686.30px;font-size:24.44px;line-height:24.44px;color:#2a2a2a;right:1729.80px;transform-origin:100% 0;transform:scaleX(0.9508);">12135</div>
<div class="t" style="top:740.30px;font-size:24.44px;line-height:24.44px;color:#2a2a2a;right:1729.80px;transform-origin:100% 0;transform:scaleX(0.9509);">3810</div>
<div class="t" style="top:794.30px;font-size:24.44px;line-height:24.44px;color:#2a2a2a;right:1729.80px;transform-origin:100% 0;transform:scaleX(0.9509);">8523</div>
<div class="t" style="top:848.30px;font-size:24.44px;line-height:24.44px;color:#2a2a2a;right:1729.80px;transform-origin:100% 0;transform:scaleX(0.9509);">2617</div>
<div class="t" style="top:902.30px;font-size:24.44px;line-height:24.44px;color:#2a2a2a;right:1729.80px;transform-origin:100% 0;transform:scaleX(0.9509);">7417</div>
<div class="t" style="top:956.30px;font-size:24.44px;line-height:24.44px;color:#2a2a2a;right:1729.80px;transform-origin:100% 0;transform:scaleX(0.9509);">3260</div>
<div class="t" style="top:1010.30px;font-size:24.44px;line-height:24.44px;color:#2a2a2a;right:1729.80px;transform-origin:100% 0;transform:scaleX(0.9509);">8919</div>
<div class="t" style="top:1064.30px;font-size:24.44px;line-height:24.44px;color:#2a2a2a;right:1729.80px;transform-origin:100% 0;transform:scaleX(0.9509);">9928</div>
<svg class="b" style="left:849px;top:404px;" width="12" height="32" viewBox="0 0 12 32"><g fill="#ddd"><rect x="0" y="0" width="3.4" height="3.4"/><rect x="0" y="5.2" width="3.4" height="3.4"/><rect x="0" y="10.4" width="3.4" height="3.4"/><rect x="0" y="15.6" width="3.4" height="3.4"/><rect x="0" y="20.8" width="3.4" height="3.4"/><rect x="0" y="26" width="3.4" height="3.4"/><rect x="6.6" y="0" width="3.4" height="3.4"/><rect x="6.6" y="5.2" width="3.4" height="3.4"/><rect x="6.6" y="10.4" width="3.4" height="3.4"/><rect x="6.6" y="15.6" width="3.4" height="3.4"/><rect x="6.6" y="20.8" width="3.4" height="3.4"/><rect x="6.6" y="26" width="3.4" height="3.4"/></g></svg>
<div class="t tb" style="top:407.30px;font-size:24.44px;line-height:24.44px;color:#333;left:868.00px;transform-origin:0 0;transform:scaleX(0.9795);">authorized_flag</div>
<div class="t" style="top:463.30px;font-size:20.68px;line-height:20.68px;color:#28a9dd;left:851.50px;transform-origin:0 0;transform:scaleX(1.0097);">Integer</div>
<div class="t" style="top:524.30px;font-size:24.44px;line-height:24.44px;color:#2a2a2a;right:1473.80px;transform-origin:100% 0;transform:scaleX(0.9517);">1</div>
<div class="t" style="top:578.30px;font-size:24.44px;line-height:24.44px;color:#2a2a2a;right:1473.80px;transform-origin:100% 0;transform:scaleX(0.9517);">0</div>
<div class="t" style="top:632.30px;font-size:24.44px;line-height:24.44px;color:#2a2a2a;right:1473.80px;transform-origin:100% 0;transform:scaleX(0.9517);">1</div>
<div class="t" style="top:686.30px;font-size:24.44px;line-height:24.44px;color:#2a2a2a;right:1473.80px;transform-origin:100% 0;transform:scaleX(0.9517);">0</div>
<div class="t" style="top:740.30px;font-size:24.44px;line-height:24.44px;color:#2a2a2a;right:1473.80px;transform-origin:100% 0;transform:scaleX(0.9517);">1</div>
<div class="t" style="top:794.30px;font-size:24.44px;line-height:24.44px;color:#2a2a2a;right:1473.80px;transform-origin:100% 0;transform:scaleX(0.9517);">1</div>
<div class="t" style="top:848.30px;font-size:24.44px;line-height:24.44px;color:#2a2a2a;right:1473.80px;transform-origin:100% 0;transform:scaleX(0.9517);">1</div>
<div class="t" style="top:902.30px;font-size:24.44px;line-height:24.44px;color:#2a2a2a;right:1473.80px;transform-origin:100% 0;transform:scaleX(0.9517);">1</div>
<div class="t" style="top:956.30px;font-size:24.44px;line-height:24.44px;color:#2a2a2a;right:1473.80px;transform-origin:100% 0;transform:scaleX(0.9517);">1</div>
<div class="t" style="top:1010.30px;font-size:24.44px;line-height:24.44px;color:#2a2a2a;right:1473.80px;transform-origin:100% 0;transform:scaleX(0.9517);">1</div>
<div class="t" style="top:1064.30px;font-size:24.44px;line-height:24.44px;color:#2a2a2a;right:1473.80px;transform-origin:100% 0;transform:scaleX(0.9517);">1</div>
<svg class="b" style="left:1105px;top:404px;" width="12" height="32" viewBox="0 0 12 32"><g fill="#ddd"><rect x="0" y="0" width="3.4" height="3.4"/><rect x="0" y="5.2" width="3.4" height="3.4"/><rect x="0" y="10.4" width="3.4" height="3.4"/><rect x="0" y="15.6" width="3.4" height="3.4"/><rect x="0" y="20.8" width="3.4" height="3.4"/><rect x="0" y="26" width="3.4" height="3.4"/><rect x="6.6" y="0" width="3.4" height="3.4"/><rect x="6.6" y="5.2" width="3.4" height="3.4"/><rect x="6.6" y="10.4" width="3.4" height="3.4"/><rect x="6.6" y="15.6" width="3.4" height="3.4"/><rect x="6.6" y="20.8" width="3.4" height="3.4"/><rect x="6.6" y="26" width="3.4" height="3.4"/></g></svg>
<div class="t tb" style="top:407.30px;font-size:24.44px;line-height:24.44px;color:#333;left:1124.00px;transform-origin:0 0;transform:scaleX(0.9606);">purchase_date</div>
<div class="t" style="top:463.30px;font-size:20.68px;line-height:20.68px;color:#28a9dd;left:1107.50px;transform-origin:0 0;transform:scaleX(0.9703);">Date</div>
<div class="t" style="top:524.30px;font-size:24.44px;line-height:24.44px;color:#2a2a2a;left:1107.50px;transform-origin:0 0;transform:scaleX(0.9579);">2017-01-28T00:00:00.…</div>
<div class="t" style="top:578.30px;font-size:24.44px;line-height:24.44px;color:#2a2a2a;left:1107.50px;transform-origin:0 0;transform:scaleX(0.9579);">2017-01-19T00:00:00.…</div>
<div class="t" style="top:632.30px;font-size:24.44px;line-height:24.44px;color:#2a2a2a;left:1107.50px;transform-origin:0 0;transform:scaleX(0.9579);">2017-01-26T00:00:00.…</div>
<div class="t" style="top:686.30px;font-size:24.44px;line-height:24.44px;color:#2a2a2a;left:1107.50px;transform-origin:0 0;transform:scaleX(0.9579);">2017-01-29T00:00:00.…</div>
<div class="t" style="top:740.30px;font-size:24.44px;line-height:24.44px;color:#2a2a2a;left:1107.50px;transform-origin:0 0;transform:scaleX(0.9579);">2017-01-09T00:00:00.…</div>
<div class="t" style="top:794.30px;font-size:24.44px;line-height:24.44px;color:#2a2a2a;left:1107.50px;transform-origin:0 0;transform:scaleX(0.9579);">2017-01-21T00:00:00.…</div>
<div class="t" style="top:848.30px;font-size:24.44px;line-height:24.44px;color:#2a2a2a;left:1107.50px;transform-origin:0 0;transform:scaleX(0.9579);">2017-01-06T00:00:00.…</div>
<div class="t" style="top:902.30px;font-size:24.44px;line-height:24.44px;color:#2a2a2a;left:1107.50px;transform-origin:0 0;transform:scaleX(0.9579);">2017-01-18T00:00:00.…</div>
<div class="t" style="top:956.30px;font-size:24.44px;line-height:24.44px;color:#2a2a2a;left:1107.50px;transform-origin:0 0;transform:scaleX(0.9579);">2017-01-07T00:00:00.…</div>
<div class="t" style="top:1010.30px;font-size:24.44px;line-height:24.44px;color:#2a2a2a;left:1107.50px;transform-origin:0 0;transform:scaleX(0.9579);">2017-01-21T00:00:00.…</div>
<div class="t" style="top:1064.30px;font-size:24.44px;line-height:24.44px;color:#2a2a2a;left:1107.50px;transform-origin:0 0;transform:scaleX(0.9579);">2017-01-24T00:00:00.…</div>
<svg class="b" style="left:1387px;top:404px;" width="12" height="32" viewBox="0 0 12 32"><g fill="#ddd"><rect x="0" y="0" width="3.4" height="3.4"/><rect x="0" y="5.2" width="3.4" height="3.4"/><rect x="0" y="10.4" width="3.4" height="3.4"/><rect x="0" y="15.6" width="3.4" height="3.4"/><rect x="0" y="20.8" width="3.4" height="3.4"/><rect x="0" y="26" width="3.4" height="3.4"/><rect x="6.6" y="0" width="3.4" height="3.4"/><rect x="6.6" y="5.2" width="3.4" height="3.4"/><rect x="6.6" y="10.4" width="3.4" height="3.4"/><rect x="6.6" y="15.6" width="3.4" height="3.4"/><rect x="6.6" y="20.8" width="3.4" height="3.4"/><rect x="6.6" y="26" width="3.4" height="3.4"/></g></svg>
<div class="t tb" style="top:407.30px;font-size:24.44px;line-height:24.44px;color:#333;left:1406.00px;transform-origin:0 0;transform:scaleX(0.9633);">card_id</div>
<div class="t" style="top:463.30px;font-size:20.68px;line-height:20.68px;color:#28a9dd;left:1389.50px;transform-origin:0 0;transform:scaleX(0.9975);">Text</div>
<div class="t" style="top:524.30px;font-size:24.44px;line-height:24.44px;color:#2a2a2a;left:1389.50px;transform-origin:0 0;transform:scaleX(0.9680);">C_ID_ff8048d2b2</div>
<div class="t" style="top:578.30px;font-size:24.44px;line-height:24.44px;color:#2a2a2a;left:1389.50px;transform-origin:0 0;transform:scaleX(0.9462);">C_ID_85379ef84c</div>
<div class="t" style="top:632.30px;font-size:24.44px;line-height:24.44px;color:#2a2a2a;left:1389.50px;transform-origin:0 0;transform:scaleX(0.9508);">C_ID_ccc1e951fb</div>
<div class="t" style="top:686.30px;font-size:24.44px;line-height:24.44px;color:#2a2a2a;left:1389.50px;transform-origin:0 0;transform:scaleX(0.9536);">C_ID_1af8021eb0</div>
<div class="t" style="top:740.30px;font-size:24.44px;line-height:24.44px;color:#2a2a2a;left:1389.50px;transform-origin:0 0;transform:scaleX(0.9481);">C_ID_b96812034a</div>
<div class="t" style="top:794.30px;font-size:24.44px;line-height:24.44px;color:#2a2a2a;left:1389.50px;transform-origin:0 0;transform:scaleX(0.9526);">C_ID_7b8ef63eac</div>
<div class="t" style="top:848.30px;font-size:24.44px;line-height:24.44px;color:#2a2a2a;left:1389.50px;transform-origin:0 0;transform:scaleX(0.9470);">C_ID_b33ee68776</div>
<div class="t" style="top:902.30px;font-size:24.44px;line-height:24.44px;color:#2a2a2a;left:1389.50px;transform-origin:0 0;transform:scaleX(0.9604);">C_ID_14fbd20690</div>
<div class="t" style="top:956.30px;font-size:24.44px;line-height:24.44px;color:#2a2a2a;left:1389.50px;transform-origin:0 0;transform:scaleX(0.9482);">C_ID_823811e76e</div>
<div class="t" style="top:1010.30px;font-size:24.44px;line-height:24.44px;color:#2a2a2a;left:1389.50px;transform-origin:0 0;transform:scaleX(0.9601);">C_ID_f08f6425da</div>
<div class="t" style="top:1064.30px;font-size:24.44px;line-height:24.44px;color:#2a2a2a;left:1389.50px;transform-origin:0 0;transform:scaleX(0.9561);">C_ID_abe44c1eb4</div>
<svg class="b" style="left:1627px;top:404px;" width="12" height="32" viewBox="0 0 12 32"><g fill="#ddd"><rect x="0" y="0" width="3.4" height="3.4"/><rect x="0" y="5.2" width="3.4" height="3.4"/><rect x="0" y="10.4" width="3.4" height="3.4"/><rect x="0" y="15.6" width="3.4" height="3.4"/><rect x="0" y="20.8" width="3.4" height="3.4"/><rect x="0" y="26" width="3.4" height="3.4"/><rect x="6.6" y="0" width="3.4" height="3.4"/><rect x="6.6" y="5.2" width="3.4" height="3.4"/><rect x="6.6" y="10.4" width="3.4" height="3.4"/><rect x="6.6" y="15.6" width="3.4" height="3.4"/><rect x="6.6" y="20.8" width="3.4" height="3.4"/><rect x="6.6" y="26" width="3.4" height="3.4"/></g></svg>
<div class="t tb" style="top:407.30px;font-size:24.44px;line-height:24.44px;color:#333;left:1646.00px;transform-origin:0 0;transform:scaleX(0.9834);">merchant_id</div>
<div class="t" style="top:463.30px;font-size:20.68px;line-height:20.68px;color:#28a9dd;left:1629.50px;transform-origin:0 0;transform:scaleX(0.9975);">Text</div>
<div class="t" style="top:524.30px;font-size:24.44px;line-height:24.44px;color:#2a2a2a;left:1629.50px;transform-origin:0 0;transform:scaleX(0.9685);">M_ID_21b5492cbf</div>
<div class="t" style="top:578.30px;font-size:24.44px;line-height:24.44px;color:#2a2a2a;left:1629.50px;transform-origin:0 0;transform:scaleX(0.9562);">M_ID_21b8a3a739</div>
<div class="t" style="top:632.30px;font-size:24.44px;line-height:24.44px;color:#2a2a2a;left:1629.50px;transform-origin:0 0;transform:scaleX(0.9748);">M_ID_21bdbaaba5</div>
<div class="t" style="top:686.30px;font-size:24.44px;line-height:24.44px;color:#2a2a2a;left:1629.50px;transform-origin:0 0;transform:scaleX(0.9671);">M_ID_21bee3f3b6</div>
<div class="t" style="top:740.30px;font-size:24.44px;line-height:24.44px;color:#2a2a2a;left:1629.50px;transform-origin:0 0;transform:scaleX(0.9671);">M_ID_21bee3f3b6</div>
<div class="t" style="top:794.30px;font-size:24.44px;line-height:24.44px;color:#2a2a2a;left:1629.50px;transform-origin:0 0;transform:scaleX(0.9560);">M_ID_21c26af10a</div>
<div class="t" style="top:848.30px;font-size:24.44px;line-height:24.44px;color:#2a2a2a;left:1629.50px;transform-origin:0 0;transform:scaleX(0.9556);">M_ID_21c42b7376</div>
<div class="t" style="top:902.30px;font-size:24.44px;line-height:24.44px;color:#2a2a2a;left:1629.50px;transform-origin:0 0;transform:scaleX(0.9555);">M_ID_21c509b90e</div>
<div class="t" style="top:956.30px;font-size:24.44px;line-height:24.44px;color:#2a2a2a;left:1629.50px;transform-origin:0 0;transform:scaleX(0.9597);">M_ID_21dfa017a6</div>
<div class="t" style="top:1010.30px;font-size:24.44px;line-height:24.44px;color:#2a2a2a;left:1629.50px;transform-origin:0 0;transform:scaleX(0.9597);">M_ID_21dfa017a6</div>
<div class="t" style="top:1064.30px;font-size:24.44px;line-height:24.44px;color:#2a2a2a;left:1629.50px;transform-origin:0 0;transform:scaleX(0.9597);">M_ID_21dfa017a6</div>
<svg class="b" style="left:1881px;top:404px;" width="12" height="32" viewBox="0 0 12 32"><g fill="#ddd"><rect x="0" y="0" width="3.4" height="3.4"/><rect x="0" y="5.2" width="3.4" height="3.4"/><rect x="0" y="10.4" width="3.4" height="3.4"/><rect x="0" y="15.6" width="3.4" height="3.4"/><rect x="0" y="20.8" width="3.4" height="3.4"/><rect x="0" y="26" width="3.4" height="3.4"/><rect x="6.6" y="0" width="3.4" height="3.4"/><rect x="6.6" y="5.2" width="3.4" height="3.4"/><rect x="6.6" y="10.4" width="3.4" height="3.4"/><rect x="6.6" y="15.6" width="3.4" height="3.4"/><rect x="6.6" y="20.8" width="3.4" height="3.4"/><rect x="6.6" y="26" width="3.4" height="3.4"/></g></svg>
<div class="t tb" style="top:407.30px;font-size:24.44px;line-height:24.44px;color:#333;left:1900.00px;transform-origin:0 0;transform:scaleX(0.9709);">item_category</div>
<div class="t" style="top:463.30px;font-size:20.68px;line-height:20.68px;color:#28a9dd;left:1883.50px;transform-origin:0 0;transform:scaleX(0.9975);">Text</div>
<div class="t" style="top:524.30px;font-size:24.44px;line-height:24.44px;color:#2a2a2a;left:1883.50px;transform-origin:0 0;transform:scaleX(0.9377);">B</div>
<div class="t" style="top:578.30px;font-size:24.44px;line-height:24.44px;color:#2a2a2a;left:1883.50px;transform-origin:0 0;transform:scaleX(0.9062);">D</div>
<div class="t" style="top:632.30px;font-size:24.44px;line-height:24.44px;color:#2a2a2a;left:1883.50px;transform-origin:0 0;transform:scaleX(0.9062);">D</div>
<div class="t" style="top:686.30px;font-size:24.44px;line-height:24.44px;color:#2a2a2a;left:1883.50px;transform-origin:0 0;transform:scaleX(0.8416);">C</div>
<div class="t" style="top:740.30px;font-size:24.44px;line-height:24.44px;color:#2a2a2a;left:1883.50px;transform-origin:0 0;transform:scaleX(0.8416);">C</div>
<div class="t" style="top:794.30px;font-size:24.44px;line-height:24.44px;color:#2a2a2a;left:1883.50px;transform-origin:0 0;transform:scaleX(0.9377);">B</div>
<div class="t" style="top:848.30px;font-size:24.44px;line-height:24.44px;color:#2a2a2a;left:1883.50px;transform-origin:0 0;transform:scaleX(0.8659);">A</div>
<div class="t" style="top:902.30px;font-size:24.44px;line-height:24.44px;color:#2a2a2a;left:1883.50px;transform-origin:0 0;transform:scaleX(0.8659);">A</div>
<div class="t" style="top:956.30px;font-size:24.44px;line-height:24.44px;color:#2a2a2a;left:1883.50px;transform-origin:0 0;transform:scaleX(0.9062);">D</div>
<div class="t" style="top:1010.30px;font-size:24.44px;line-height:24.44px;color:#2a2a2a;left:1883.50px;transform-origin:0 0;transform:scaleX(0.8659);">A</div>
<div class="t" style="top:1064.30px;font-size:24.44px;line-height:24.44px;color:#2a2a2a;left:1883.50px;transform-origin:0 0;transform:scaleX(0.9377);">B</div>
<svg class="b" style="left:2107px;top:404px;" width="12" height="32" viewBox="0 0 12 32"><g fill="#ddd"><rect x="0" y="0" width="3.4" height="3.4"/><rect x="0" y="5.2" width="3.4" height="3.4"/><rect x="0" y="10.4" width="3.4" height="3.4"/><rect x="0" y="15.6" width="3.4" height="3.4"/><rect x="0" y="20.8" width="3.4" height="3.4"/><rect x="0" y="26" width="3.4" height="3.4"/><rect x="6.6" y="0" width="3.4" height="3.4"/><rect x="6.6" y="5.2" width="3.4" height="3.4"/><rect x="6.6" y="10.4" width="3.4" height="3.4"/><rect x="6.6" y="15.6" width="3.4" height="3.4"/><rect x="6.6" y="20.8" width="3.4" height="3.4"/><rect x="6.6" y="26" width="3.4" height="3.4"/></g></svg>
<div class="t tb" style="top:407.30px;font-size:24.44px;line-height:24.44px;color:#333;left:2126.00px;transform-origin:0 0;transform:scaleX(0.9687);">purchase_amount</div>
<div class="t" style="top:463.30px;font-size:20.68px;line-height:20.68px;color:#28a9dd;left:2109.50px;transform-origin:0 0;transform:scaleX(1.0021);">Decimal</div>
<div class="t" style="top:524.30px;font-size:24.44px;line-height:24.44px;color:#2a2a2a;right:161.80px;transform-origin:100% 0;transform:scaleX(0.9511);">499.80</div>
<div class="t" style="top:578.30px;font-size:24.44px;line-height:24.44px;color:#2a2a2a;right:161.80px;transform-origin:100% 0;transform:scaleX(0.9512);">82.54</div>
<div class="t" style="top:632.30px;font-size:24.44px;line-height:24.44px;color:#2a2a2a;right:161.80px;transform-origin:100% 0;transform:scaleX(0.9512);">19.96</div>
<div class="t" style="top:686.30px;font-size:24.44px;line-height:24.44px;color:#2a2a2a;right:161.80px;transform-origin:100% 0;transform:scaleX(0.9512);">61.68</div>
<div class="t" style="top:740.30px;font-size:24.44px;line-height:24.44px;color:#2a2a2a;right:161.80px;transform-origin:100% 0;transform:scaleX(0.9512);">21.56</div>
<div class="t" style="top:794.30px;font-size:24.44px;line-height:24.44px;color:#2a2a2a;right:161.80px;transform-origin:100% 0;transform:scaleX(0.9512);">35.20</div>
<div class="t" style="top:848.30px;font-size:24.44px;line-height:24.44px;color:#2a2a2a;right:161.80px;transform-origin:100% 0;transform:scaleX(0.9747);">114.62</div>
<div class="t" style="top:902.30px;font-size:24.44px;line-height:24.44px;color:#2a2a2a;right:161.80px;transform-origin:100% 0;transform:scaleX(0.9511);">162.87</div>
<div class="t" style="top:956.30px;font-size:24.44px;line-height:24.44px;color:#2a2a2a;right:161.80px;transform-origin:100% 0;transform:scaleX(0.9512);">15.14</div>
<div class="t" style="top:1010.30px;font-size:24.44px;line-height:24.44px;color:#2a2a2a;right:161.80px;transform-origin:100% 0;transform:scaleX(0.9512);">25.01</div>
<div class="t" style="top:1064.30px;font-size:24.44px;line-height:24.44px;color:#2a2a2a;right:161.80px;transform-origin:100% 0;transform:scaleX(0.9512);">20.76</div>
<div class="b" style="left:2410px;top:384px;width:66px;height:702px;overflow:hidden;">
<svg class="b" style="left:7px;top:20px;" width="12" height="32" viewBox="0 0 12 32"><g fill="#ddd"><rect x="0" y="0" width="3.4" height="3.4"/><rect x="0" y="5.2" width="3.4" height="3.4"/><rect x="0" y="10.4" width="3.4" height="3.4"/><rect x="0" y="15.6" width="3.4" height="3.4"/><rect x="0" y="20.8" width="3.4" height="3.4"/><rect x="0" y="26" width="3.4" height="3.4"/><rect x="6.6" y="0" width="3.4" height="3.4"/><rect x="6.6" y="5.2" width="3.4" height="3.4"/><rect x="6.6" y="10.4" width="3.4" height="3.4"/><rect x="6.6" y="15.6" width="3.4" height="3.4"/><rect x="6.6" y="20.8" width="3.4" height="3.4"/><rect x="6.6" y="26" width="3.4" height="3.4"/></g></svg>
<div class="t tb" style="top:23.30px;font-size:24.44px;line-height:24.44px;color:#333;left:26.00px;transform-origin:0 0;transform:scaleX(0.9700);">purchase_amount_eur</div>
<div class="t" style="top:79.30px;font-size:20.68px;line-height:20.68px;color:#28a9dd;left:9.50px;transform-origin:0 0;transform:scaleX(1.0021);">Decimal</div>
</div>
<svg class="b" style="left:2502px;top:203.5px;" width="40" height="40" viewBox="0 0 40 40"><circle cx="20" cy="20" r="20" fill="#a0cdff"/><path d="M20 10.5 V29.5 M10.5 20 H29.5" stroke="#fff" stroke-width="2.6" stroke-linecap="round" fill="none"/></svg>
<svg class="b" style="left:2502px;top:300px;" width="40" height="40" viewBox="0 0 40 40"><circle cx="20" cy="20" r="20" fill="#a0cdff"/><circle cx="20" cy="11.8" r="1.7" fill="#fff"/><path d="M20 16.5 V28.5" stroke="#fff" stroke-width="2.6" stroke-linecap="round" fill="none"/></svg>
<svg class="b" style="left:2502px;top:396px;" width="40" height="40" viewBox="0 0 40 40"><circle cx="20" cy="20" r="20.7" fill="#a0cdff"/><g fill="none" stroke="#fff" stroke-width="2.2" stroke-linejoin="round"><path d="M6.5 18.5 A10 9.5 0 1 1 12 27 L7 29 L8.6 24.6 Q6.5 21.8 6.5 18.5 Z"/><path d="M27.5 12.5 A9 9 0 0 1 31.8 26.5 L33.5 30.5 L28.5 29 Q25 31 21 30"/></g></svg>
<svg class="b" style="left:2502px;top:491.5px;" width="40" height="40" viewBox="0 0 40 40"><circle cx="20" cy="20" r="20" fill="#a0cdff"/><circle cx="20" cy="20" r="13.2" fill="none" stroke="#fff" stroke-width="2.6"/><path d="M20 11.5 V21 H13" stroke="#fff" stroke-width="2.4" fill="none"/></svg>
<div class="b" style="left:0;top:76px;width:2560px;height:1010px;overflow:hidden;pointer-events:none;">
<div class="b" style="left:434px;top:0px;width:400px;height:360px;background:#333;box-shadow:0 5px 26px rgba(0,0,0,0.42);"></div>
</div>
<div class="b" style="left:434px;top:76px;width:8px;height:72px;background:#2bb15d;"></div>
<div class="b" style="left:442px;top:76px;width:392px;height:72px;background:#444;"></div>
<div class="t" style="top:100.30px;font-size:26.88px;line-height:26.88px;color:#f2f2f2;left:464.70px;transform-origin:0 0;transform:scaleX(0.9445);-webkit-text-stroke-width:0.6px;">Visual Analyses</div>
<div class="t" style="top:102.30px;font-size:22.56px;line-height:22.56px;color:#bbb;left:761.50px;transform-origin:0 0;transform:scaleX(0.8695);">G+A</div>
<div class="t" style="top:172.30px;font-size:26.88px;line-height:26.88px;color:#fff;left:465.00px;transform-origin:0 0;transform:scaleX(0.9448);-webkit-text-stroke-width:0.6px;">Saved Models</div>
<div class="t" style="top:244.30px;font-size:26.88px;line-height:26.88px;color:#fff;left:465.00px;transform-origin:0 0;transform:scaleX(0.9644);-webkit-text-stroke-width:0.6px;">Model Evaluation Stores</div>
<div class="t" style="top:316.30px;font-size:26.88px;line-height:26.88px;color:#fff;left:465.00px;transform-origin:0 0;transform:scaleX(0.9703);-webkit-text-stroke-width:0.6px;">Model Comparisons</div>
<div class="t" style="top:388.30px;font-size:26.88px;line-height:26.88px;color:#fff;left:465.00px;transform-origin:0 0;transform:scaleX(0.9786);-webkit-text-stroke-width:0.6px;">Experiment Tracking</div>
<svg class="b" style="left:0px;top:0px;pointer-events:none;" width="2560" height="200" viewBox="0 0 2560 200"><path d="M389 77 A40 40 0 1 0 389 155 C410 150 435 133 464 116 C435 99 410 82 389 77 Z" fill="#ff5a4d" style="filter:drop-shadow(0 2px 2px rgba(0,0,0,0.55))"/></svg>
<div class="b" style="left:372.39px;top:89.00px;width:31px;height:54px;font-size:54px;line-height:54px;font-weight:bold;color:#fff;transform-origin:0 0;transform:scaleX(0.9);clip-path:polygon(0 0,31px 0,31px 39.79px,20.51px 39.79px,20.51px 54px,12.10px 54px,12.10px 39.79px,0 39.79px);">1</div>
<svg class="b" style="left:0px;top:0px;pointer-events:none;" width="2560" height="200" viewBox="0 0 2560 200"><path d="M1551 87 A40 40 0 1 0 1551 165 C1572 160 1597 143 1626 126 C1597 109 1572 92 1551 87 Z" fill="#ff5a4d" style="filter:drop-shadow(0 2px 2px rgba(0,0,0,0.55))"/><text x="1547" y="145.5" text-anchor="middle" style="font-family:'Liberation Sans',sans-serif;font-size:52px" fill="#fff" stroke="#fff" stroke-width="1.3">3</text></svg>
<div class="b" style="left:0px;top:0px;width:2px;height:1086px;background:rgba(255,255,255,0.22);"></div>
<div class="b" style="left:2558px;top:0px;width:2px;height:1086px;background:rgba(255,255,255,0.22);"></div>
<div class="b" style="left:0px;top:75.3px;width:434px;height:0.7px;background:rgba(0,0,0,0.4);"></div>
<div class="b" style="left:514px;top:75.3px;width:2046px;height:0.7px;background:rgba(0,0,0,0.4);"></div>
</div>
</body></html>
